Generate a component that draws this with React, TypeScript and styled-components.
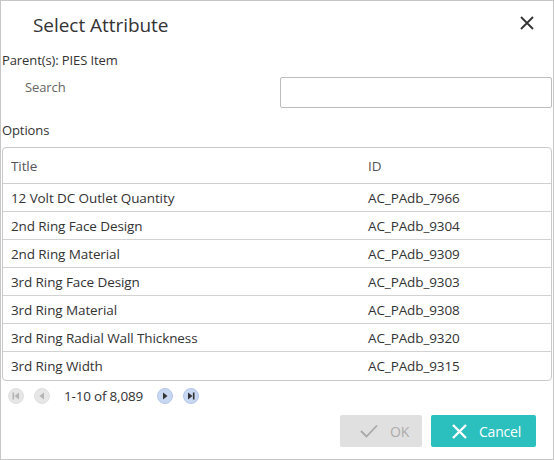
import React, { useState } from 'react'
import styled, { createGlobalStyle, css } from 'styled-components'

const GlobalStyle = createGlobalStyle`
  html, body {
    margin: 0;
    padding: 0;
    background: #fff;
  }
  * {
    box-sizing: border-box;
  }
`

const Dialog = styled.div`
  width: 554px;
  height: 460px;
  border: 1px solid #c6c6c6;
  background: #fff;
  display: flex;
  flex-direction: column;
  font-family: 'Open Sans', 'Noto Sans', sans-serif;
  color: #333;
  font-size: 13px;
`

const Header = styled.div`
  height: 49px;
  display: flex;
  align-items: center;
  justify-content: space-between;
  padding: 0 18px 2px 32px;
`

const Title = styled.h1`
  margin: 0;
  font-size: 19px;
  font-weight: 400;
  color: #333;
  letter-spacing: -0.05px;
`

const CloseButton = styled.button`
  border: none;
  background: none;
  padding: 0;
  width: 16px;
  height: 16px;
  display: flex;
  align-items: center;
  justify-content: center;
  cursor: pointer;
  margin-top: -4px;
`

const Body = styled.div`
  flex: 1;
  display: flex;
  flex-direction: column;
  padding: 0 1px;
`

const Line = styled.div<{ $top?: number }>`
  height: 20px;
  line-height: 20px;
  margin-top: ${(p) => p.$top ?? 0}px;
  letter-spacing: -0.1px;
`

const SearchRow = styled.div`
  display: flex;
  align-items: flex-start;
  justify-content: space-between;
  margin-top: 7px;
`

const SearchLabel = styled.label`
  padding-left: 23px;
  line-height: 20px;
  color: #666;
  letter-spacing: -0.1px;
`

const SearchInput = styled.input`
  width: 272px;
  height: 31px;
  border: 1px solid #bdbdbd;
  border-radius: 2px;
  outline: none;
  font-family: inherit;
  font-size: 13px;
  padding: 0 8px;
`

const Table = styled.div`
  margin-top: 7px;
  border: 1px solid #c9c9c9;
  border-radius: 4px;
  overflow: hidden;
`

const Row = styled.div<{ $head?: boolean }>`
  display: grid;
  grid-template-columns: 357px 1fr;
  align-items: center;
  padding-left: 8px;
  font-size: 13.5px;
  letter-spacing: -0.1px;
  ${(p) =>
    p.$head
      ? css`
          height: 36px;
          color: #555;
          border-bottom: 1px solid #cfcfcf;
        `
      : css`
          height: 28px;
          color: #333;
          &:not(:last-child) {
            border-bottom: 1px solid #d2d2d2;
          }
        `}
`

const Pager = styled.div`
  height: 29px;
  display: flex;
  align-items: center;
  padding-left: 6px;
`

const PageButton = styled.button<{ $enabled?: boolean }>`
  width: 16px;
  height: 16px;
  border-radius: 50%;
  padding: 0;
  display: flex;
  align-items: center;
  justify-content: center;
  margin-right: 10px;
  ${(p) =>
    p.$enabled
      ? css`
          background: #c9d8f2;
          border: 1px solid #b3c6ea;
          color: #333;
        `
      : css`
          background: #e6e6e6;
          border: 1px solid #e0e0e0;
          color: #b4b4b4;
        `}
`

const PageInfo = styled.span`
  margin: 0 14px 0 4px;
  font-size: 13.5px;
  letter-spacing: -0.2px;
  color: #333;
`

const Footer = styled.div`
  display: flex;
  justify-content: flex-end;
  gap: 9px;
  padding-right: 16px;
  margin-top: 5px;
`

const ActionButton = styled.button<{ $primary?: boolean }>`
  height: 32px;
  border: none;
  border-radius: 2px;
  display: flex;
  align-items: center;
  font-family: inherit;
  font-size: 14px;
  letter-spacing: -0.2px;
  ${(p) =>
    p.$primary
      ? css`
          width: 105px;
          background: #2bbfbd;
          color: #fff;
          padding-left: 21px;
          gap: 12px;
          cursor: pointer;
        `
      : css`
          width: 82px;
          background: #e0e0e0;
          color: #ababab;
          padding-left: 20px;
          gap: 12px;
        `}
`

const rows = [
  ['12 Volt DC Outlet Quantity', 'AC_PAdb_7966'],
  ['2nd Ring Face Design', 'AC_PAdb_9304'],
  ['2nd Ring Material', 'AC_PAdb_9309'],
  ['3rd Ring Face Design', 'AC_PAdb_9303'],
  ['3rd Ring Material', 'AC_PAdb_9308'],
  ['3rd Ring Radial Wall Thickness', 'AC_PAdb_9320'],
  ['3rd Ring Width', 'AC_PAdb_9315'],
]

const Arrow = ({ dir, bar }: { dir: 'left' | 'right'; bar?: boolean }) => (
  <svg width="8" height="8" viewBox="0 0 8 8">
    {dir === 'left' ? (
      <>
        {bar && <rect x="0.5" y="0.5" width="1.6" height="7" fill="currentColor" />}
        <polygon points={bar ? '7,0.5 2.5,4 7,7.5' : '6,0.5 1.5,4 6,7.5'} fill="currentColor" />
      </>
    ) : (
      <>
        <polygon points={bar ? '1,0.5 5.5,4 1,7.5' : '2,0.5 6.5,4 2,7.5'} fill="currentColor" />
        {bar && <rect x="5.9" y="0.5" width="1.6" height="7" fill="currentColor" />}
      </>
    )}
  </svg>
)

const App = () => {
  const [search, setSearch] = useState('')

  return (
    <Dialog>
      <GlobalStyle />
      <Header>
        <Title>Select Attribute</Title>
        <CloseButton aria-label="Close">
          <svg width="14" height="14" viewBox="0 0 14 14">
            <path d="M1 1 L13 13 M13 1 L1 13" stroke="#333" strokeWidth="1.8" />
          </svg>
        </CloseButton>
      </Header>
      <Body>
        <Line>Parent(s): PIES Item</Line>
        <SearchRow>
          <SearchLabel>Search</SearchLabel>
          <SearchInput value={search} onChange={(e) => setSearch(e.target.value)} />
        </SearchRow>
        <Line $top={12}>Options</Line>
        <Table>
          <Row $head>
            <span>Title</span>
            <span>ID</span>
          </Row>
          {rows.map(([title, id]) => (
            <Row key={id}>
              <span>{title}</span>
              <span>{id}</span>
            </Row>
          ))}
        </Table>
        <Pager>
          <PageButton aria-label="First page"><Arrow dir="left" bar /></PageButton>
          <PageButton aria-label="Previous page"><Arrow dir="left" /></PageButton>
          <PageInfo>1-10 of 8,089</PageInfo>
          <PageButton $enabled aria-label="Next page"><Arrow dir="right" /></PageButton>
          <PageButton $enabled aria-label="Last page"><Arrow dir="right" bar /></PageButton>
        </Pager>
        <Footer>
          <ActionButton disabled>
            <svg width="18" height="14" viewBox="0 0 18 14">
              <path d="M1 7 L6.5 12.5 L17 1.5" stroke="#a8a8a8" strokeWidth="1.8" fill="none" />
            </svg>
            OK
          </ActionButton>
          <ActionButton $primary>
            <svg width="15" height="15" viewBox="0 0 15 15">
              <path d="M1 1 L14 14 M14 1 L1 14" stroke="#fff" strokeWidth="2.4" />
            </svg>
            Cancel
          </ActionButton>
        </Footer>
      </Body>
    </Dialog>
  )
}

export default App
